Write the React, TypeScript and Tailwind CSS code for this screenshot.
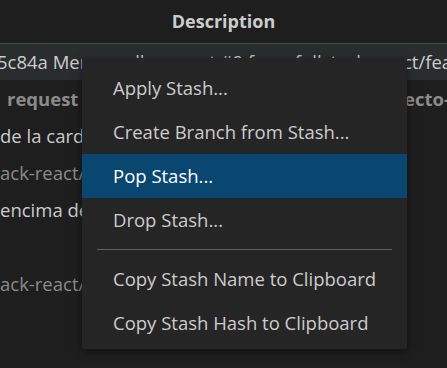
import React from 'react';

type Row = {
    left: string;
    right?: string;
    tone: 'light' | 'muted' | 'mutedBold';
    hover?: boolean;
    leftClass?: string;
};

const rows: Row[] = [
    { left: '5c84a Merge pull request #9 from fullstack-react/feature', right: 'ct/feature-card', tone: 'light', hover: true, leftClass: 'w-[406px] -ml-[3px]' },
    { left: 'request #10 from fullstack-react/proyecto-cards', right: 'ecto-cards', tone: 'mutedBold', leftClass: 'w-[404px] pl-[7px]' },
    { left: 'de la card principal', tone: 'light' },
    { left: 'ack-react/feature-card', tone: 'muted' },
    { left: 'encima de la card', tone: 'light' },
    { left: '', tone: 'light' },
    { left: 'ack-react/proyecto-cards', tone: 'muted' },
];

const toneClass = {
    light: 'text-[#cccccc]',
    muted: 'text-[#8b8b8b]',
    mutedBold: 'text-[#8b8b8b] font-bold',
};

const menu: (string | null)[] = [
    'Apply Stash...',
    'Create Branch from Stash...',
    'Pop Stash...',
    'Drop Stash...',
    null,
    'Copy Stash Name to Clipboard',
    'Copy Stash Hash to Clipboard',
];

export default function App() {
    return (
        <div
            className="relative w-[447px] h-[368px] overflow-hidden bg-[#1e1e1e] text-[18.5px]"
            style={{ fontFamily: '"Open Sans", "Noto Sans", sans-serif' }}
        >
            <div className="h-[44px] flex items-center justify-center border-b border-[#4a4a4a] font-bold text-[18px] text-[#cccccc]">
                Description
            </div>

            {rows.map((r, i) => (
                <div
                    key={i}
                    className={`flex items-center overflow-hidden whitespace-nowrap ${r.hover ? 'h-[36px] bg-[#2a2d2e]' : 'h-[37px]'} ${toneClass[r.tone]}`}
                >
                    <span className={`shrink-0 overflow-hidden ${r.leftClass ?? 'w-[403px]'}`}>{r.left}</span>
                    {r.right && <span>{r.right}</span>}
                </div>
            ))}

            <div className="absolute left-[82px] top-[58px] w-[325px] bg-[#252526] pt-[8px] pb-[4px] shadow-[0_2px_8px_rgba(0,0,0,0.5)]">
                {menu.map((m, i) =>
                    m === null ? (
                        <div key={i} className="h-[15px] flex items-center px-[15px]">
                            <div className="h-px w-full bg-[#606060]" />
                        </div>
                    ) : (
                        <div
                            key={i}
                            className={`h-[44px] flex items-center pl-[31px] whitespace-nowrap ${
                                m === 'Pop Stash...' ? 'bg-[#094771] text-white' : 'text-[#cccccc]'
                            }`}
                        >
                            {m}
                        </div>
                    )
                )}
            </div>
        </div>
    );
}
